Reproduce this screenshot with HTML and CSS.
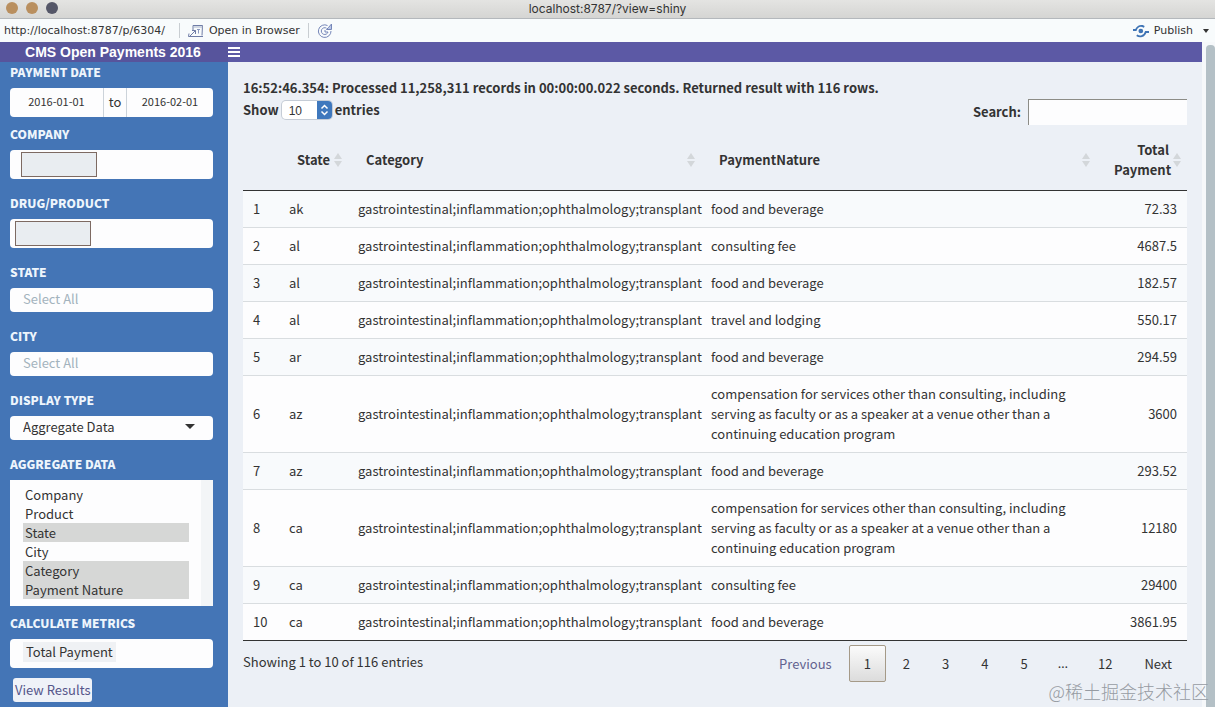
FILE: index.html
```html
<!DOCTYPE html>
<html lang="en">

<head>
    <meta charset="UTF-8" />
    <meta name="viewport" content="width=device-width, initial-scale=1.0" />
    <title>localhost:8787/?view=shiny</title>
    <link rel="stylesheet" href="styles.css">
</head>

<body>

    <!-- window chrome -->
    <div class="titlebar">
        <div class="dots">
            <span class="dot"></span>
            <span class="dot"></span>
            <span class="dot dark"></span>
        </div>
        <span class="window-title">localhost:8787/?view=shiny</span>
    </div>

    <div class="toolbar">
        <span class="url">http://localhost:8787/p/6304/</span>
        <span class="divider"></span>
        <button class="tool-btn">
            <svg width="16" height="14" viewBox="0 0 16 14" fill="none" stroke="#6f7ca6">
                <path d="M5 6V1.500h9.500l-.5 10" />
                <path d="M5 3h9.500" stroke="#a9b4cb" />
                <path d="M1.500 12.500l6-6M4 6.500h3.500V10M1 9.500L.5 12.500h14.500" />
                <path d="M9 5.500h3M10.500 5.500v4" stroke="#8b98bd" />
            </svg>
            Open in Browser
        </button>
        <span class="divider"></span>
        <button class="tool-btn" aria-label="Refresh">
            <svg width="16" height="16" viewBox="0 0 16 16" fill="none" stroke="#7586b8">
                <path d="M10.500 2.500A6.300 6.300 0 1 0 14 8" />
                <path d="M9.500 5.200A3.400 3.400 0 1 0 11 9L8 9V7" />
                <path d="M14.500 1v5.500H9.500l2-2z" fill="#b9c6e6" />
            </svg>
        </button>
        <button class="tool-btn publish">
            <svg width="16" height="14" viewBox="0 0 17 14" fill="none" stroke="#3f74b5" stroke-width="2">
                <path d="M0 6h3c1-3 4-5 7-4.300l2 .8" />
                <path d="M4 11.500c3 2.200 8 1.500 9.500-3.500H17" />
                <circle cx="8.300" cy="7" r="2.500" fill="#3f74b5" stroke="none" />
            </svg>
            Publish
            <svg class="caret" width="6" height="4" viewBox="0 0 6 4">
                <path d="M0 0h6L3 4z" fill="#333" />
            </svg>
        </button>
    </div>

    <div class="page">
        <div class="app">
            <header class="app-header">
                <div class="logo">CMS Open Payments 2016</div>
                <button class="menu-btn" aria-label="Toggle navigation">
                    <svg width="12" height="11" viewBox="0 0 12 11" fill="#fff">
                        <path d="M0 0h12v2H0zM0 4h12v2H0zM0 8h12v2H0z" />
                    </svg>
                </button>
            </header>

            <div class="app-body">
                <aside class="sidebar">
                    <div class="form-group tight">
                        <label for="date-from">PAYMENT DATE</label>
                        <div class="date-range">
                            <input type="text" id="date-from" class="from" value="2016-01-01" />
                            <span class="addon">to</span>
                            <input type="text" class="until" aria-label="Payment date end" value="2016-02-01" />
                        </div>
                    </div>
                    <div class="form-group">
                        <label for="company">COMPANY</label>
                        <div class="select-box company">
                            <span class="masked"></span>
                            <input type="text" id="company" />
                        </div>
                    </div>
                    <div class="form-group">
                        <label for="drug">DRUG/PRODUCT</label>
                        <div class="select-box drug">
                            <span class="masked"></span>
                            <input type="text" id="drug" />
                        </div>
                    </div>
                    <div class="form-group">
                        <label for="state">STATE</label>
                        <input type="text" id="state" class="text-field" placeholder="Select All" />
                    </div>
                    <div class="form-group">
                        <label for="city">CITY</label>
                        <input type="text" id="city" class="text-field" placeholder="Select All" />
                    </div>
                    <div class="form-group">
                        <label for="display-type">DISPLAY TYPE</label>
                        <div class="dropdown">
                            <select id="display-type">
                                <option>Aggregate Data</option>
                            </select>
                            <svg width="10" height="5" viewBox="0 0 10 5">
                                <path d="M0 0h10L5 5z" fill="#333" />
                            </svg>
                        </div>
                    </div>
                    <div class="form-group tight">
                        <label for="aggregate">AGGREGATE DATA</label>
                        <select id="aggregate" class="list" size="6" multiple>
                            <option>Company</option>
                            <option>Product</option>
                            <option selected>State</option>
                            <option>City</option>
                            <option selected>Category</option>
                            <option selected>Payment Nature</option>
                        </select>
                    </div>
                    <div class="form-group tight">
                        <label for="metrics">CALCULATE METRICS</label>
                        <div class="select-box metrics">
                            <span class="tag">Total Payment</span>
                            <input type="text" id="metrics" />
                        </div>
                    </div>
                    <button class="view-btn">View Results</button>
                </aside>

                <main class="content">
                    <div class="status">16:52:46.354: Processed 11,258,311 records in 00:00:00.022 seconds. Returned result with 116 rows.</div>

                    <div class="table-controls">
                        <label class="length">
                            Show
                            <span class="length-select">
                                <select>
                                    <option>10</option>
                                </select>
                                <svg width="15" height="18" viewBox="0 0 15 18">
                                    <path d="M0 0h11a4 4 0 0 1 4 4v10a4 4 0 0 1-4 4H0z" fill="#3f78bd" />
                                    <path d="M4.500 7.500l3-3 3 3M4.500 10.500l3 3 3-3" fill="none" stroke="#fff" stroke-width="1.500" />
                                </svg>
                            </span>
                            entries
                        </label>
                        <label class="search">
                            Search:
                            <input type="text" />
                        </label>
                    </div>

                    <table class="data-table">
                        <colgroup>
                            <col class="col-num" />
                            <col class="col-state" />
                            <col class="col-category" />
                            <col />
                            <col class="col-total" />
                        </colgroup>
                        <thead>
                            <tr>
                                <th></th>
                                <th class="sortable">State</th>
                                <th class="sortable">Category</th>
                                <th class="sortable">PaymentNature</th>
                                <th class="sortable num">Total Payment</th>
                            </tr>
                        </thead>
                        <tbody>
                            <tr><td>1</td><td>ak</td><td>gastrointestinal;inflammation;ophthalmology;transplant</td><td>food and beverage</td><td class="num">72.33</td></tr>
                            <tr><td>2</td><td>al</td><td>gastrointestinal;inflammation;ophthalmology;transplant</td><td>consulting fee</td><td class="num">4687.5</td></tr>
                            <tr><td>3</td><td>al</td><td>gastrointestinal;inflammation;ophthalmology;transplant</td><td>food and beverage</td><td class="num">182.57</td></tr>
                            <tr><td>4</td><td>al</td><td>gastrointestinal;inflammation;ophthalmology;transplant</td><td>travel and lodging</td><td class="num">550.17</td></tr>
                            <tr><td>5</td><td>ar</td><td>gastrointestinal;inflammation;ophthalmology;transplant</td><td>food and beverage</td><td class="num">294.59</td></tr>
                            <tr><td>6</td><td>az</td><td>gastrointestinal;inflammation;ophthalmology;transplant</td><td>compensation for services other than consulting, including serving as faculty or as a speaker at a venue other than a continuing education program</td><td class="num">3600</td></tr>
                            <tr><td>7</td><td>az</td><td>gastrointestinal;inflammation;ophthalmology;transplant</td><td>food and beverage</td><td class="num">293.52</td></tr>
                            <tr><td>8</td><td>ca</td><td>gastrointestinal;inflammation;ophthalmology;transplant</td><td>compensation for services other than consulting, including serving as faculty or as a speaker at a venue other than a continuing education program</td><td class="num">12180</td></tr>
                            <tr><td>9</td><td>ca</td><td>gastrointestinal;inflammation;ophthalmology;transplant</td><td>consulting fee</td><td class="num">29400</td></tr>
                            <tr><td>10</td><td>ca</td><td>gastrointestinal;inflammation;ophthalmology;transplant</td><td>food and beverage</td><td class="num">3861.95</td></tr>
                        </tbody>
                    </table>

                    <div class="table-footer">
                        <div class="info">Showing 1 to 10 of 116 entries</div>
                        <nav class="paging">
                            <button class="previous">Previous</button>
                            <button class="current">1</button>
                            <button>2</button>
                            <button>3</button>
                            <button>4</button>
                            <button>5</button>
                            <span class="ellipsis">…</span>
                            <button>12</button>
                            <button>Next</button>
                        </nav>
                    </div>
                </main>
            </div>
        </div>
        <div class="scrollbar"><div class="thumb"></div></div>
    </div>

    <div class="watermark">@稀土掘金技术社区</div>

</body>

</html>
```
FILE: styles.css
```css
* {
    box-sizing: border-box;
}

body {
    display: flex;
    flex-direction: column;
    height: 100vh;
    margin: 0;
    overflow: hidden;
    font-family: "Noto Sans CJK SC", sans-serif;
    font-size: 13px;
    line-height: 20px;
    color: #333;
}

button,
input,
select {
    margin: 0;
    padding: 0;
    border: none;
    border-radius: 0;
    outline: none;
    background: none;
    font: inherit;
    color: inherit;
}

/* window chrome */
.titlebar {
    position: relative;
    display: flex;
    justify-content: center;
    height: 19px;
    flex: none;
    background: linear-gradient(#e4e4e2, #d5d5d3);
    border-bottom: 1px solid #b4b8bc;
    font-family: Inter, sans-serif;
    font-size: 12px;
    line-height: 18px;
}

.dots {
    position: absolute;
    left: 6px;
    top: 2px;
    display: flex;
    gap: 8px;
}

.dot {
    width: 12px;
    height: 12px;
    border-radius: 50%;
    background: #b98f5f;
}

.dot.dark {
    background: #555768;
}

.toolbar {
    display: flex;
    align-items: center;
    flex: none;
    height: 23px;
    padding: 0 6px 0 4px;
    background: #f8fbfc;
    font-family: "DejaVu Sans", sans-serif;
    font-size: 11px;
}

.url {
    margin-right: 6px;
}

.divider {
    width: 1px;
    height: 15px;
    margin: 0 8px;
    background: #c9ced2;
}

.tool-btn {
    display: flex;
    align-items: center;
    gap: 5px;
}

.publish {
    margin-left: auto;
}

.caret {
    margin-left: 5px;
}

.page {
    display: flex;
    flex: 1;
    min-height: 0;
}

.app {
    display: flex;
    flex-direction: column;
    flex: 1;
    min-width: 0;
}

.scrollbar {
    width: 13px;
    padding: 3px 0 0 4px;
    background: #f6f8fa;
}

.thumb {
    height: 100%;
    border-radius: 4px 4px 0 0;
    background: #b4c0c6;
}

/* header */
.app-header {
    display: flex;
    flex: none;
    height: 20px;
    background: #5c59a5;
    color: #fff;
}

.logo {
    width: 228px;
    padding-right: 2px;
    background: #57549c;
    font-family: "Liberation Sans", Arial, sans-serif;
    font-size: 14px;
    font-weight: bold;
    text-align: center;
}

.menu-btn {
    display: flex;
    align-items: center;
}

.app-body {
    display: flex;
    flex: 1;
    min-height: 0;
}

/* sidebar */
.sidebar {
    width: 228px;
    flex: none;
    padding: 0 15px 0 10px;
    background: #4475b6;
}

.form-group {
    display: flex;
    flex-direction: column;
    gap: 6px;
    margin-bottom: 14px;
}

.form-group.tight {
    margin-bottom: 7px;
}

.form-group label {
    font-size: 12px;
    font-weight: 900;
    color: #eef5fc;
}

.date-range,
.select-box,
.text-field,
.dropdown {
    display: flex;
    height: 29px;
    overflow: hidden;
    border-radius: 4px;
    background: #fdfdfe;
}

.date-range input {
    min-width: 0;
    padding-bottom: 3px;
    text-align: center;
    font-size: 11px;
}

.from {
    flex: 1;
}

.until {
    width: 86px;
}

.addon {
    width: 24px;
    border: solid #ccd3da;
    border-width: 0 1px;
    line-height: 28px;
    text-align: center;
}

.select-box {
    align-items: center;
}

.select-box input {
    flex: 1;
    min-width: 0;
}

.select-box.company {
    padding-left: 11px;
}

.select-box.drug {
    padding-left: 5px;
}

.select-box.metrics {
    align-items: flex-start;
    padding: 3px 0 0 13px;
}

.masked {
    width: 76px;
    height: 25px;
    border: 1px solid #7d6a62;
    background: #e9edf1;
}

.tag {
    padding: 0 3px;
    background: #eff1f4;
}

.text-field {
    height: 24px;
    padding: 0 13px 3px;
}

.text-field::placeholder {
    color: #a3b3bd;
}

.dropdown {
    position: relative;
    height: 24px;
}

.dropdown select {
    width: 100%;
    padding: 0 13px 2px;
    appearance: none;
}

.dropdown svg {
    position: absolute;
    right: 18px;
    top: 8px;
    pointer-events: none;
}

.list {
    height: 126px;
    padding: 5px 24px 6px 13px;
    overflow: hidden;
    background: linear-gradient(#f3f5f7, #f3f5f7) right / 12px 100% no-repeat #fdfdfe;
}

.list option {
    min-height: 19px;
    padding: 0 2px;
    line-height: 19px;
}

.list option:checked {
    background: #d6d7d6;
    color: #333;
}

.view-btn {
    height: 24px;
    margin: 3px;
    padding: 0 2px 1px;
    border-radius: 3px;
    background: #eff2f8;
    color: #55558a;
}

/* content */
.content {
    flex: 1;
    min-width: 0;
    padding: 16px 15px 0;
    background: #ecf0f6;
}

.status,
.table-controls {
    font-weight: bold;
}

.table-controls {
    display: flex;
    justify-content: space-between;
    height: 32px;
}

.length,
.search {
    display: flex;
    align-items: center;
}

.length {
    gap: 3px;
    height: 24px;
}

.length-select {
    position: relative;
    display: flex;
}

.length-select select {
    width: 50px;
    height: 18px;
    padding: 0 7px;
    appearance: none;
    border-radius: 4px;
    background: #fff;
    box-shadow: 0 0 0 1px #c5ccd6;
    font-family: "Liberation Sans", Arial, sans-serif;
    font-size: 12px;
    font-weight: normal;
}

.length-select svg {
    position: absolute;
    right: 0;
    top: 0;
    pointer-events: none;
}

.search {
    gap: 7px;
    height: 28px;
}

.search input {
    width: 159px;
    height: 26px;
    padding: 0 4px;
    border: solid #8c8c86;
    border-width: 1px 0 0 1px;
    background: #fdfdfe;
}

.data-table {
    width: 100%;
    table-layout: fixed;
    border-spacing: 0;
    border-bottom: 1px solid #333;
}

.col-num {
    width: 36px;
}

.col-state {
    width: 69px;
}

.col-category {
    width: 353px;
}

.col-total {
    width: 91px;
}

.data-table th {
    position: relative;
    padding: 10px 18px;
    border-bottom: 1px solid #333;
    text-align: left;
}

.data-table td {
    padding: 8px 10px;
    border-top: 1px solid #d9dde0;
    background: #fdfdfe;
}

.data-table tbody tr:first-child td {
    border-top: none;
}

.data-table tbody tr:nth-child(odd) td {
    background: #f8fafc;
}

.data-table .num {
    text-align: right;
}

/* sort arrows */
.sortable::before,
.sortable::after {
    content: "";
    position: absolute;
    right: 6px;
    border: solid transparent;
    border-width: 0 4px;
}

.sortable::before {
    bottom: 50%;
    margin-bottom: 1px;
    border-bottom: 6px solid #d3d7da;
}

.sortable::after {
    top: 50%;
    margin-top: 1px;
    border-top: 6px solid #d3d7da;
}

.table-footer {
    display: flex;
    justify-content: space-between;
    padding-top: 4px;
}

.info {
    padding-top: 7px;
}

.paging {
    display: flex;
    gap: 2px;
}

.paging button,
.ellipsis {
    height: 37px;
    padding: 0 14px;
    border: 1px solid transparent;
    border-radius: 2px;
    line-height: 35px;
}

.paging .previous {
    color: #62628f;
}

.paging .current {
    border-color: #a59a88;
    background: linear-gradient(#fbfbfb, #dcdcdc);
}

.paging .ellipsis {
    padding: 0 12px;
    font-family: "Noto Sans", sans-serif;
}

.watermark {
    position: absolute;
    right: 6px;
    bottom: 4px;
    font-family: "Noto Sans CJK SC", sans-serif;
    font-size: 18px;
    font-weight: 300;
    line-height: 24px;
    color: #969ba2;
}
```
